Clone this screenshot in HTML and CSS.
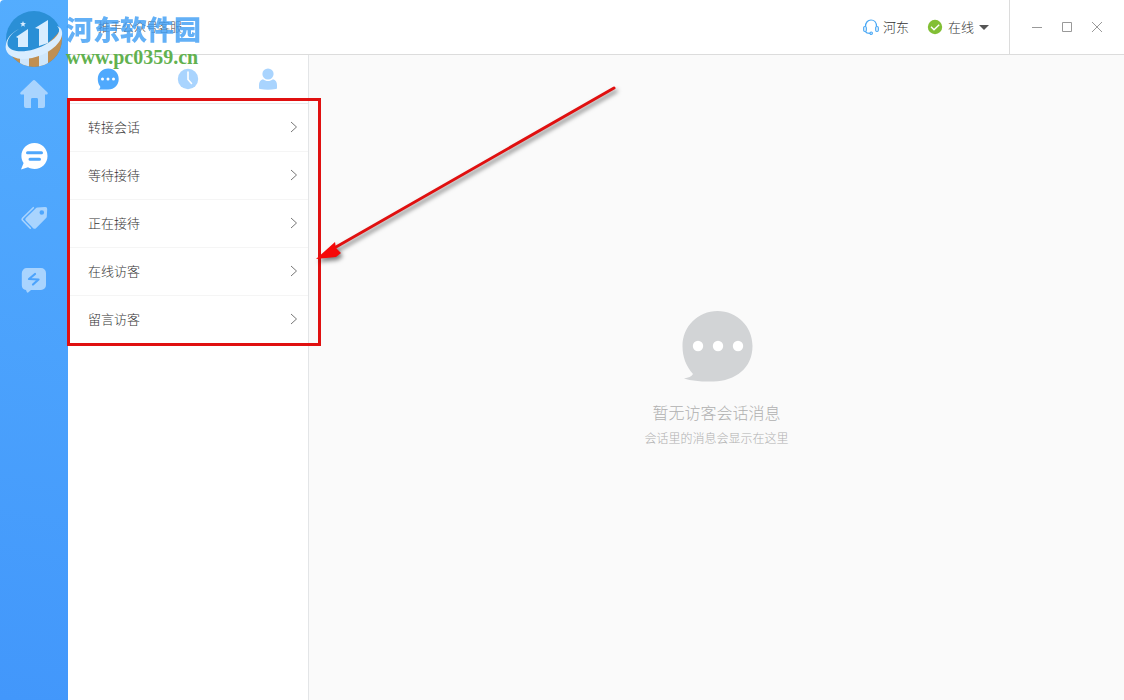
FILE: index.html
```
<!DOCTYPE html>
<html lang="zh-CN">
<head>
    <meta charset="UTF-8">
    <title>推手公众号客服</title>
    <link rel="stylesheet" href="styles.css">
</head>
<body>
<div class="app">
    <nav class="sidebar">
        <a href="#" class="nav-link" aria-label="首页">
            <svg width="28" height="28" viewBox="0 0 28 28" fill="currentColor">
                <path d="M12.6.7a2 2 0 0 1 2.8 0L27.3 12.2c1 1 .4 2.4-.9 2.4H25V26a2 2 0 0 1-2 2h-5v-8.600a1.400 1.400 0 0 0-1.400-1.400h-4.200a1.400 1.400 0 0 0-1.400 1.400V28H6a2 2 0 0 1-2-2V14.600H1.600c-1.300 0-1.900-1.400-.9-2.400z"/>
            </svg>
        </a>
        <a href="#" class="nav-link current" aria-label="会话">
            <svg width="28" height="28" viewBox="0 0 28 28">
                <path fill="currentColor" d="M14.500 1C22 1 27.500 6.700 27.500 14S22 27 14.500 27c-2.400 0-4.600-.6-6.500-1.700L1 27.500 3.600 21C2.200 19 1.400 16.600 1.400 14 1.400 6.700 7 1 14.500 1z"/>
                <path stroke="#4fa7fc" stroke-width="3" stroke-linecap="round" d="M7.500 10.800h14M10 17.300h9.500"/>
            </svg>
        </a>
        <a href="#" class="nav-link" aria-label="标签">
            <svg width="28" height="28" viewBox="0 0 28 28">
                <path fill="currentColor" fill-rule="evenodd" d="M17.500 3.500 25 3a2 2 0 0 1 2.200 2.100l-.4 7.300c0 .8-.3 1.400-.9 1.900L16 24.200c-.8.8-2 .8-2.800 0l-7.300-7.400c-.8-.8-.8-1.900 0-2.700L15.600 4.400c.5-.5 1.100-.8 1.900-.9zM21.800 6.200a2.300 2.300 0 1 0 0 4.600 2.300 2.300 0 0 0 0-4.600z"/>
                <path fill="none" stroke="currentColor" stroke-width="1.600" stroke-linecap="round" stroke-linejoin="round" d="M13.300 3.700 2.800 14c-.9.9-.9 1.600 0 2.500l7.500 7.700"/>
            </svg>
        </a>
        <a href="#" class="nav-link" aria-label="快捷">
            <svg width="28" height="28" viewBox="0 0 28 28">
                <path fill="currentColor" d="M7 2h14a5 5 0 0 1 5 5v12a5 5 0 0 1-5 5H11l-2.500 2.300c-.8.7-1.400.6-1.700-.3L6 24a5 5 0 0 1-4.200-5V7a5 5 0 0 1 5.200-5z"/>
                <path fill="none" stroke="#4ca3fc" stroke-width="2.200" stroke-linecap="round" stroke-linejoin="round" d="M15 8 9 13l9.500.5L13 18.500"/>
            </svg>
        </a>
    </nav>

    <div class="container">
        <header class="header">
            <h1 class="title">推手公众号客服</h1>
            <div class="user">
                <svg width="16" height="16" viewBox="0 0 16 16" fill="none" stroke="#4aa8f5" stroke-width="1.200">
                    <path d="M2.500 7.500C2.500 3.500 4.800 1 8 1s5.500 2.500 5.500 6.500"/>
                    <rect x=".7" y="7.500" width="2.600" height="5" rx="1.200"/>
                    <rect x="12.700" y="7.500" width="2.600" height="5" rx="1.200"/>
                    <path d="M2.500 12.500c.6 1.300 2 1.900 4.500 1.900"/>
                    <circle cx="8.200" cy="14.200" r="1.200"/>
                </svg>
                <span>河东</span>
            </div>
            <button type="button" class="status">
                <svg width="16" height="16" viewBox="0 0 16 16">
                    <circle cx="8" cy="8" r="7.200" fill="#82bf35"/>
                    <path d="m4 7.800 3 3 5.200-5" fill="none" stroke="#fff" stroke-width="1.400"/>
                </svg>
                <span>在线</span>
                <i class="caret"></i>
            </button>
            <div class="window-btns">
                <button type="button" aria-label="最小化">
                    <svg width="12" height="12" viewBox="0 0 12 12"><path d="M1 6.500h10"/></svg>
                </button>
                <button type="button" aria-label="最大化">
                    <svg width="12" height="12" viewBox="0 0 12 12"><path d="M1.500 1.500h9v9h-9z"/></svg>
                </button>
                <button type="button" aria-label="关闭">
                    <svg width="12" height="12" viewBox="0 0 12 12"><path d="m1 1 10 10M11 1 1 11"/></svg>
                </button>
            </div>
        </header>

        <div class="content">
            <aside class="panel">
                <div class="tabs">
                    <button type="button" class="current" aria-label="会话">
                        <svg width="22" height="22" viewBox="0 0 22 22">
                            <path fill="currentColor" d="M11.300.5C17.300.5 21.700 5 21.700 11s-4.400 10.500-10.400 10.500H1.500c1.500-.7 2-1.700 1.600-3.200C1.500 16.300.8 14 .8 11 .8 5 5.300.5 11.300.5z"/>
                            <g fill="#fff"><circle cx="5.500" cy="11" r="1.500"/><circle cx="11" cy="11" r="1.500"/><circle cx="16.500" cy="11" r="1.500"/></g>
                        </svg>
                    </button>
                    <button type="button" aria-label="历史">
                        <svg width="22" height="22" viewBox="0 0 22 22">
                            <circle cx="11" cy="11" r="10.200" fill="currentColor"/>
                            <path d="M11 4v7.500l3.500 4" fill="none" stroke="#fff" stroke-width="1.600" stroke-linecap="round"/>
                        </svg>
                    </button>
                    <button type="button" aria-label="访客">
                        <svg width="22" height="22" viewBox="0 0 22 22" fill="currentColor">
                            <circle cx="11" cy="6" r="5.600"/>
                            <path d="M6 11.300c3 2.400 7 2.400 10 0 2.600.8 4 2.800 4 5.800v2.300c0 1-.5 1.500-1.300 1.700-5 .9-10.400.9-15.400 0-.8-.2-1.300-.7-1.300-1.700v-2.300c0-3 1.400-5 4-5.800z"/>
                        </svg>
                    </button>
                </div>
                <ul class="list">
                    <li><a href="#">转接会话<svg width="8" height="12" viewBox="0 0 8 12"><path d="m1 1 5.500 5L1 11"/></svg></a></li>
                    <li><a href="#">等待接待<svg width="8" height="12" viewBox="0 0 8 12"><path d="m1 1 5.500 5L1 11"/></svg></a></li>
                    <li><a href="#">正在接待<svg width="8" height="12" viewBox="0 0 8 12"><path d="m1 1 5.500 5L1 11"/></svg></a></li>
                    <li><a href="#">在线访客<svg width="8" height="12" viewBox="0 0 8 12"><path d="m1 1 5.500 5L1 11"/></svg></a></li>
                    <li><a href="#">留言访客<svg width="8" height="12" viewBox="0 0 8 12"><path d="m1 1 5.500 5L1 11"/></svg></a></li>
                </ul>
            </aside>

            <main class="empty">
                <svg width="72" height="72" viewBox="0 0 72 72">
                    <path fill="#d2d4d6" d="M36.500 1C56 1 71.500 16.500 71.500 36c0 22-17 35-39 35.500C21 71.800 11 71 3 68.500c4.500-.8 7.500-2 9-4.500C5 56 1.500 47 1.500 36 1.500 16.500 17 1 36.500 1z"/>
                    <g fill="#fff"><circle cx="17" cy="36" r="5.200"/><circle cx="37" cy="36" r="5.200"/><circle cx="57" cy="36" r="5.200"/></g>
                </svg>
                <h2>暂无访客会话消息</h2>
                <p>会话里的消息会显示在这里</p>
            </main>
        </div>
    </div>
</div>

<!-- 水印 -->
<div class="watermark">
    <svg width="60" height="60" viewBox="0 0 60 60">
        <defs>
            <clipPath id="disc"><circle cx="30" cy="29" r="28"/></clipPath>
        </defs>
        <g clip-path="url(#disc)">
            <path fill="#2a8fd6" d="M0 0h60v60H0z"/>
            <path fill="#c08f52" d="M0 40c22 9 42 0 58-22l2 42H0z"/>
            <path fill="#cfe6fa" d="M16 44h9v16h-9zM35 42h9v18h-9z"/>
        </g>
        <path fill="#d9edff" d="m12 27 12-8v18H14v-9zM31 18l13-8v23l-9 3V19z"/>
        <path fill="#d9edff" d="M15 19C6 24 2 31 4 36c4 8 24 7 40-3 10-6 14-13 9-17 6 2 7 9 2 16C47 43 31 49 18 49 6 48 0 42 2 34c1-6 5-11 13-15z"/>
        <path fill="#d9edff" d="m19 11 .8 2 2.200.2-1.700 1.400.5 2.100-1.800-1.100-1.800 1.100.5-2.100-1.700-1.400 2.200-.2z"/>
    </svg>
    <div class="watermark-text">
        <strong>河东软件园</strong>
        <span>www.pc0359.cn</span>
    </div>
</div>

<!-- 标注 -->
<div class="mark"></div>
<svg class="arrow" width="310" height="190" viewBox="0 0 310 190">
    <path class="line" d="M300 8 22 167"/>
    <path class="head" d="m2 179 19-17 1 6 5 5-5 4z"/>
</svg>
</body>
</html>
```
FILE: styles.css
```
* {
    padding: 0;
    margin: 0;
    box-sizing: border-box;
    list-style: none;
}

body {
    font-family: "Noto Sans CJK SC", sans-serif;
    font-size: 13px;
    font-weight: 300;
    color: #333;
    background: #fff;
}

a {
    color: inherit;
    text-decoration: none;
}

button {
    border: 0;
    background: none;
    font: inherit;
    color: inherit;
    cursor: pointer;
}

svg {
    display: block;
    flex: none;
}

.app {
    display: flex;
    min-height: 100vh;
}

/* 左侧导航 */
.sidebar {
    flex: none;
    width: 68px;
    padding-top: 80px;
    border-top-left-radius: 4px;
    background: linear-gradient(190deg, #54adfe, #4297fb);
}

.nav-link {
    display: flex;
    justify-content: center;
    margin-bottom: 34px;
    color: #a9d4fe;
}

.nav-link.current {
    color: #fff;
}

.container {
    flex: 1;
    display: flex;
    flex-direction: column;
}

/* 顶部 */
.header {
    display: flex;
    align-items: center;
    height: 55px;
    border-bottom: 1px solid #dcdcdc;
}

.title {
    flex: 1;
    padding: 0 0 2px 30px;
    font-size: 12px;
    font-weight: 300;
    color: #444;
}

.user {
    display: flex;
    align-items: center;
    gap: 4px;
}

.user span,
.status span {
    padding-bottom: 2px;
}

.status {
    display: flex;
    align-items: center;
    gap: 5px;
    padding: 0 20px 0 18px;
}

.caret {
    border: 5px solid transparent;
    border-top-color: #555;
    border-bottom: 0;
}

.window-btns {
    display: flex;
    align-self: stretch;
    align-items: center;
    padding: 0 12px;
    border-left: 1px solid #dcdcdc;
}

.window-btns button {
    display: flex;
    justify-content: center;
    width: 30px;
    padding: 9px 0;
}

.window-btns path {
    fill: none;
    stroke: #999;
}

.content {
    flex: 1;
    display: flex;
}

/* 会话列表 */
.panel {
    flex: none;
    width: 241px;
    border-right: 1px solid #e3e5e7;
}

.tabs {
    display: flex;
    height: 49px;
    border-bottom: 1px solid #e8eaec;
}

.tabs button {
    flex: 1;
    display: flex;
    align-items: center;
    justify-content: center;
    color: #a9d4fe;
}

.tabs button.current {
    color: #4fa9fd;
}

.list a {
    display: flex;
    align-items: center;
    justify-content: space-between;
    height: 48px;
    padding: 0 10px 2px 20px;
    border-bottom: 1px solid #f5f5f5;
}

.list path {
    fill: none;
    stroke: #777;
}

/* 空消息 */
.empty {
    flex: 1;
    display: flex;
    flex-direction: column;
    align-items: center;
    justify-content: center;
    padding-top: 3px;
    background: #fafafa;
    color: #b0b0b0;
}

.empty h2 {
    margin-top: 18px;
    font-size: 16px;
    font-weight: 300;
    line-height: 24px;
}

.empty p {
    margin-top: 4px;
    font-size: 12px;
    line-height: 20px;
}

/* 水印 */
.watermark {
    position: absolute;
    left: 4px;
    top: 10px;
    display: flex;
    gap: 2px;
    pointer-events: none;
}

.watermark-text {
    display: flex;
    flex-direction: column;
}

.watermark strong {
    font-size: 27px;
    font-weight: 900;
    line-height: 38px;
    color: #3d9df5;
    opacity: 0.8;
}

.watermark span {
    font-family: "Liberation Serif", serif;
    font-size: 20px;
    font-weight: bold;
    line-height: 18px;
    color: #62b14f;
}

/* 红框和箭头 */
.mark {
    position: absolute;
    left: 67px;
    top: 98px;
    width: 254px;
    height: 248px;
    border: 3px solid #e01010;
    pointer-events: none;
}

.arrow {
    position: absolute;
    left: 314px;
    top: 80px;
    pointer-events: none;
    filter: drop-shadow(2px 3px 2px rgba(0, 0, 0, 0.5));
}

.arrow .line {
    stroke: #e01010;
    stroke-width: 3;
    stroke-linecap: round;
}

.arrow .head {
    fill: #f50808;
}
```
